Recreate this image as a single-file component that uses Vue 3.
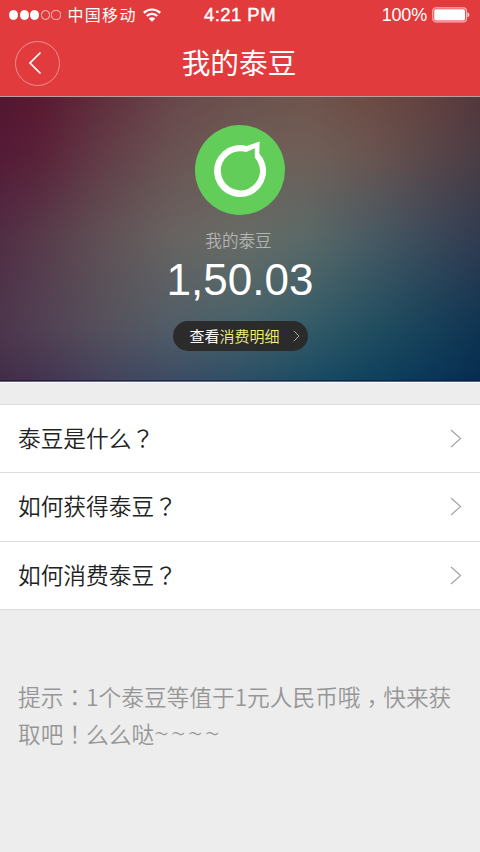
<script setup>
const dots = [true, true, true, false, false]
const questions = ['泰豆是什么', '如何获得泰豆', '如何消费泰豆']

const mesh = [
  ['#4c142f', '#59152d', '#602838', '#684148', '#6b4b48', '#6f5047', '#6f453c', '#643c3a', '#4a2f38'],
  ['#521638', '#5a2038', '#633d48', '#6a5352', '#6e5e58', '#706058', '#6a5450', '#574448', '#433842'],
  ['#4c2440', '#573a4a', '#605256', '#686462', '#686c66', '#5a6a68', '#465a64', '#384658', '#2a344c'],
  ['#4a3048', '#524054', '#56525c', '#525e68', '#46626a', '#355c68', '#224e60', '#153e58', '#0c2e4e'],
  ['#3a2440', '#3c2c4c', '#3a3a5c', '#304262', '#204462', '#0c4260', '#043a5c', '#022f56', '#021f48'],
]
// Each row is a horizontal blend that fades in over the row above it.
const layers = mesh.map((colors, i) => {
  const mask = i
    ? `linear-gradient(to bottom, transparent ${(i - 1) * 25}%, #000 ${i * 25}%)`
    : 'none'
  return { background: `linear-gradient(to right, ${colors.join(', ')})`, maskImage: mask }
})
</script>

<template>
  <div class="screen">
    <header class="top">
      <div class="status">
        <div class="status-left">
          <span class="dots"><i v-for="(on, i) in dots" :key="i" :class="{ on }"></i></span>
          <span class="carrier">中国移动</span>
          <svg class="wifi" width="18" height="14" viewBox="0 0 18 14" fill="none" stroke="#fff" stroke-width="2.2">
            <path d="M.8 4.9a11.6 11.6 0 0 1 16.4 0" />
            <path d="M3.7 8a7.5 7.5 0 0 1 10.6 0" />
            <path d="M9 13.8 5.7 10.5a4.7 4.7 0 0 1 6.6 0z" fill="#fff" stroke="none" />
          </svg>
        </div>
        <span class="time">4:21 PM</span>
        <div class="status-right">
          <span>100%</span>
          <svg width="38" height="16" viewBox="0 0 38 16">
            <rect x=".8" y=".8" width="33.6" height="14" rx="3" fill="none" stroke="#f6b5b5" stroke-width="1.2" />
            <rect x="2.2" y="2.2" width="30.8" height="11.2" rx="1.6" fill="#fff" />
            <path d="M35.4 5.2q2 .8 2 2.6t-2 2.6z" fill="#fbd5d5" />
          </svg>
        </div>
      </div>
      <div class="nav">
        <button class="back" aria-label="返回">
          <svg width="14" height="24" viewBox="0 0 14 24" fill="none" stroke="#fff" stroke-width="1.7">
            <path d="M12.5 1.5 2 12l10.5 10.5" />
          </svg>
        </button>
        <h1>我的泰豆</h1>
        <span></span>
      </div>
    </header>

    <section class="hero">
      <div class="backdrop">
        <div v-for="(layer, i) in layers" :key="i" class="layer" :style="layer"></div>
      </div>
      <div class="hero-body">
        <svg class="logo" width="90" height="90" viewBox="0 0 90 90">
          <circle cx="45" cy="45" r="45" fill="#62cd58" />
          <path
            fill="#fff"
            fill-rule="evenodd"
            d="M51.5 20.9 64.6 16.5 64.3 28.6A26 26 0 1 1 51.5 20.9zM51.3 27.1A19.6 19.6 0 1 0 59.8 32.5V23.3z"
          />
        </svg>
        <p class="label">我的泰豆</p>
        <p class="amount">1,50.03</p>
        <a class="detail">
          <span><b>查看</b><em>消费明细</em></span>
          <svg width="7" height="12" viewBox="0 0 7 12" fill="none" stroke="#aaa" stroke-width="1">
            <path d="M.8.8 6 6 .8 11.2" />
          </svg>
        </a>
      </div>
    </section>

    <ul class="list">
      <li v-for="q in questions" :key="q">
        <span>{{ q }}<b class="mark">？</b></span>
        <svg width="12" height="19" viewBox="0 0 12 19" fill="none" stroke="#a0a0a2" stroke-width="1.1">
          <path d="M1 1 10.6 9.5 1 18" />
        </svg>
      </li>
    </ul>

    <p class="tip">提示<b class="mark">：</b>1个泰豆等值于1元人民币哦<b class="mark comma">，</b>快来获<br />取吧<b class="mark">！</b>么么哒<span class="tilde">~~~~</span></p>
  </div>
</template>

<style>
body {
  background: #ededed;
}
</style>

<style scoped>
.screen {
  width: 480px;
  height: 852px;
  overflow: hidden;
  background: #ededed;
  font-family: "Noto Sans CJK SC", sans-serif;
  font-weight: 350;
}
.top {
  box-sizing: border-box;
  height: 97px;
  background: #e23b3d;
  border-bottom: 1px solid #b7a09e;
  color: #fff;
}
.status {
  display: grid;
  grid-template-columns: 1fr auto 1fr;
  align-items: center;
  height: 30px;
  padding: 0 10px 0 9px;
}
.status-left,
.status-right {
  display: flex;
  align-items: center;
}
.status-right {
  justify-content: flex-end;
  gap: 6px;
  font: 18px/30px "Liberation Sans", sans-serif;
}
.status-right span {
  margin-right: -1px;
  letter-spacing: -.2px;
}
.dots {
  display: flex;
  gap: 1.4px;
}
.dots i {
  box-sizing: border-box;
  width: 9.2px;
  height: 9.2px;
  border: 1px solid #f9caca;
  border-radius: 50%;
}
.dots .on {
  border-color: #fff;
  background: #fff;
}
.carrier {
  margin: 0 6px 0 7px;
  padding-bottom: 2px;
  font-size: 16px;
  line-height: 28px;
  letter-spacing: 1.3px;
  font-weight: 400;
}
.time {
  padding-left: 1px;
  font: 18.5px/30px "Liberation Sans", sans-serif;
  letter-spacing: .45px;
  -webkit-text-stroke: .4px #fff;
}
.nav {
  display: grid;
  grid-template-columns: 46px 1fr 46px;
  align-items: center;
  height: 66px;
  padding: 0 15px;
}
.back {
  display: flex;
  align-items: center;
  justify-content: center;
  width: 45px;
  height: 45px;
  padding: 0 5px 0 0;
  border: 1px solid #f08f90;
  border-radius: 50%;
  background: none;
}
h1 {
  margin: 0;
  padding: 0 2px 2px 0;
  font-size: 28.7px;
  line-height: 58px;
  font-weight: 400;
  text-align: center;
}
.hero {
  display: grid;
  height: 285px;
  overflow: hidden;
  border-bottom: 1px solid #fafafa;
}
.backdrop {
  display: grid;
  margin: -30px;
  filter: blur(10px);
}
.backdrop,
.layer,
.hero-body {
  grid-area: 1 / 1;
}
.hero-body {
  z-index: 1;
  display: flex;
  flex-direction: column;
  align-items: center;
  padding-top: 28px;
  border-bottom: 1px solid rgba(130, 130, 170, .6);
  box-shadow: inset 0 -1px rgba(10, 10, 50, .5);
}
.label {
  margin: 12px 3px 0 0;
  color: #b4b4b2;
  font-size: 16.6px;
  line-height: 26px;
}
.amount {
  margin: 1px 0 0;
  color: #fff;
  font: 44px/52px "Liberation Sans", sans-serif;
}
.detail {
  box-sizing: border-box;
  display: flex;
  align-items: center;
  justify-content: space-between;
  width: 135px;
  height: 30px;
  margin-top: 15px;
  padding: 0 8px 0 17px;
  border-radius: 15px;
  background: #2b2b2b;
  color: #fff;
  font-size: 15px;
}
.detail span {
  padding-bottom: 2px;
}
.detail b {
  font-weight: 400;
}
em {
  color: #f0f07c;
  font-style: normal;
}
.list {
  margin: 21px 0 0;
  padding: 0;
  list-style: none;
  border-top: 1px solid #dedede;
}
li {
  box-sizing: border-box;
  display: flex;
  align-items: center;
  justify-content: space-between;
  height: 68.3px;
  padding: 0 18px;
  border-bottom: 1px solid #dedede;
  background: #fff;
  color: #222;
  font-size: 22.7px;
}
li span {
  padding-bottom: 2px;
}
.mark {
  font-family: "Noto Sans CJK TC", sans-serif;
  font-weight: 350;
}
.tip {
  margin: 68px 0 0;
  padding: 0 18px;
  color: #969696;
  font-size: 22.7px;
  line-height: 37px;
  white-space: nowrap;
}
.comma {
  line-height: 1;
  vertical-align: -6px;
}
.tilde {
  font-family: "Open Sans", sans-serif;
  font-size: 25px;
  line-height: 1;
  letter-spacing: 2.7px;
}
</style>
